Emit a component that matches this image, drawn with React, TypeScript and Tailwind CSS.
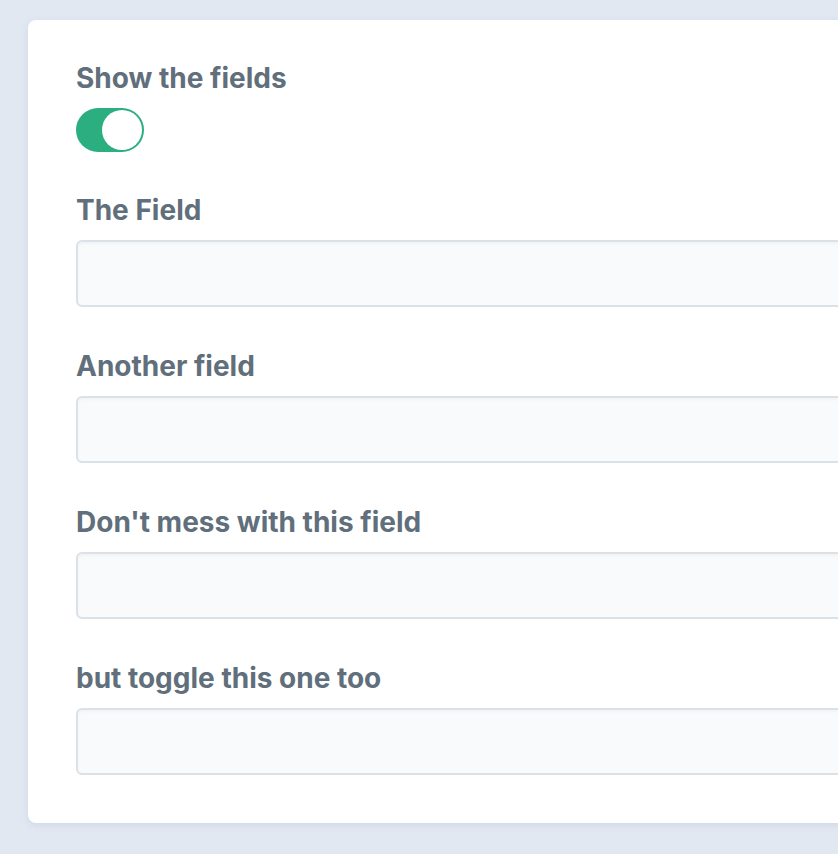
import { useState } from 'react'

const fields = ['The Field', 'Another field', "Don't mess with this field", 'but toggle this one too']

// Switch styled like the green toggle in the reference
function Toggle({ on, onChange }: { on: boolean; onChange: () => void }) {
  return (
    <button
      type="button"
      onClick={onChange}
      className={`flex items-center w-[68px] h-[44px] rounded-full p-[2px] ${on ? 'bg-[#2bae80] justify-end' : 'bg-[#dae1e7] justify-start'}`}
    >
      <span className="block w-[40px] h-[40px] rounded-full bg-white" />
    </button>
  )
}

export default function App() {
  const [show, setShow] = useState(true)

  return (
    <div
      className="min-h-screen w-full overflow-hidden bg-[#e1e8f2] pt-[20px] pl-[28px] pb-[31px]"
      style={{ fontFamily: 'Inter, "Noto Sans", sans-serif' }}
    >
      <div className="w-[880px] bg-white rounded-lg shadow-[0_2px_6px_rgba(160,175,195,0.25)] px-12 pt-[40px] pb-12">
        <label className="block text-[28px] leading-9 font-bold text-[#606f7b]">Show the fields</label>
        <div className="mt-[12px]">
          <Toggle on={show} onChange={() => setShow(!show)} />
        </div>

        {show &&
          fields.map((f, i) => (
            <div key={f} className={i === 0 ? 'mt-[40px]' : 'mt-[41px]'}>
              <label className="block text-[28px] leading-9 font-bold text-[#606f7b] mb-[12px]">{f}</label>
              <input
                type="text"
                className="block w-full h-[67px] rounded-md border-2 border-[#dae1e7] bg-[#f8fafc] shadow-[inset_0_2px_3px_rgba(0,0,0,0.03)] px-4 text-[24px] text-[#606f7b] outline-none"
              />
            </div>
          ))}
      </div>
    </div>
  )
}
